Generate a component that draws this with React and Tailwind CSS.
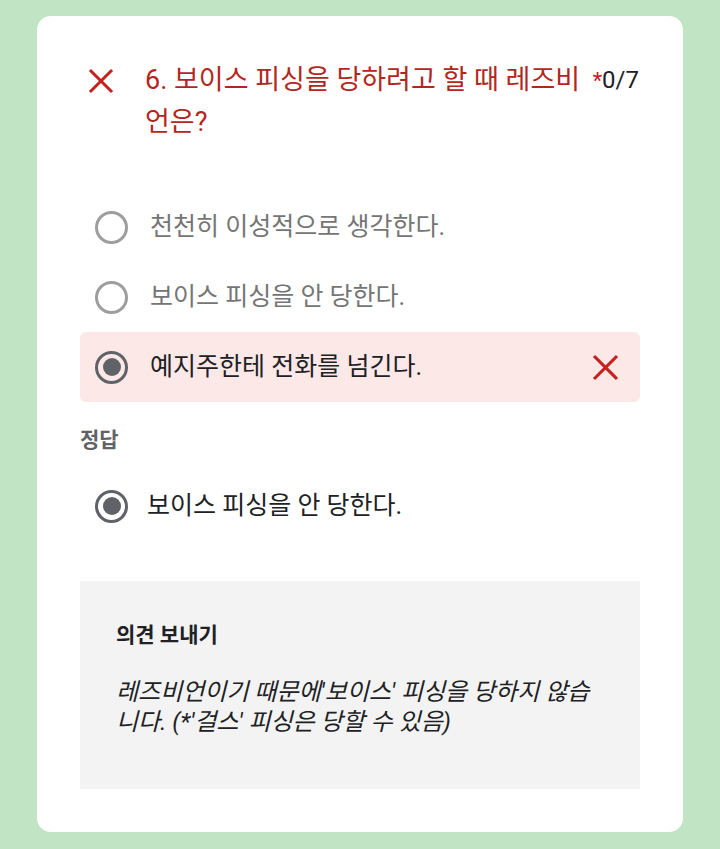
const font = { fontFamily: '"Roboto", "Noto Sans CJK KR", sans-serif' };

function Cross({ className }) {
  return (
    <svg viewBox="0 0 26 26" className={className} fill="none" stroke="currentColor" strokeWidth="3" strokeLinecap="square">
      <path d="M3 3 L23 23 M23 3 L3 23" />
    </svg>
  );
}

function Radio({ checked, dim }) {
  return (
    <span
      className={`flex h-[33px] w-[33px] shrink-0 items-center justify-center rounded-full border-[3px] ${
        dim ? "border-[#9e9e9e]" : "border-[#5f6368]"
      }`}
    >
      {checked && <span className="h-[18px] w-[18px] rounded-full bg-[#5f6368]" />}
    </span>
  );
}

export default function App() {
  return (
    <div className="min-h-[849px] bg-[#c1e4c4] px-[37px] pt-[16px] pb-[17px]" style={font}>
      <div className="rounded-[14px] bg-white pb-[43px]">
        <div className="flex items-start pl-[51px] pr-[44px] pt-[43px]">
          <Cross className="mt-[9px] h-[26px] w-[26px] shrink-0 text-[#c5221f]" />
          <div className="ml-[31px] flex-1 break-keep text-[27px] leading-[42px] text-[#b3261e]">
            6. 보이스 피싱을 당하려고 할 때 레즈비 언은?
          </div>
          <div className="shrink-0 leading-[42px]">
            <span className="text-[22px] text-[#c5221f]">*</span>
            <span className="text-[24px] text-[#202124]">0/7</span>
          </div>
        </div>

        <div className="mt-[49px] px-[43px]">
          <div className="flex h-[70px] items-center gap-[22px] pl-[15px] text-[25px] text-[#757575]">
            <Radio dim />
            <span>천천히 이성적으로 생각한다.</span>
          </div>
          <div className="flex h-[70px] items-center gap-[22px] pl-[15px] text-[25px] text-[#757575]">
            <Radio dim />
            <span>보이스 피싱을 안 당한다.</span>
          </div>
          <div className="flex h-[70px] items-center gap-[22px] rounded-[6px] bg-[#fce8e6] pl-[15px] pr-[21px] text-[25px] text-[#202124]">
            <Radio checked />
            <span className="flex-1">예지주한테 전화를 넘긴다.</span>
            <Cross className="h-[27px] w-[27px] text-[#c5221f]" />
          </div>

          <div className="mt-[24px] text-[21px] font-semibold leading-[28px] text-[#5f6368]">정답</div>

          <div className="mt-[17px] flex h-[70px] items-center gap-[19px] pl-[15px] text-[25px] text-[#202124]">
            <Radio checked />
            <span>보이스 피싱을 안 당한다.</span>
          </div>

          <div className="mt-[40px] h-[208px] bg-[#f3f3f3] px-[36px] pt-[40px]">
            <div className="text-[21px] font-bold leading-[28px] text-[#202124]">의견 보내기</div>
            <div className="mt-[28px] text-[24px] italic leading-[30px] text-[#202124]">
              레즈비언이기 때문에'보이스' 피싱을 당하지 않습니다. (*'걸스' 피싱은 당할 수 있음)
            </div>
          </div>
        </div>
      </div>
    </div>
  );
}
